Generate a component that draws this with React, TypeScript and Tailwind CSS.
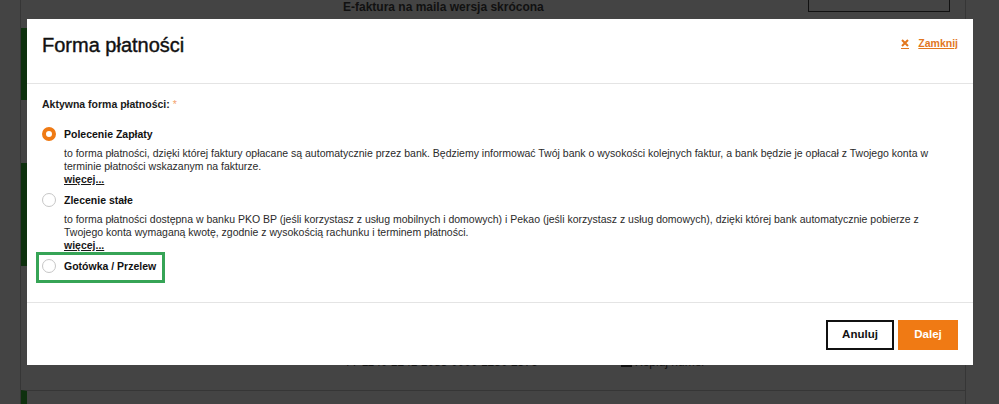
const font = { fontFamily: '"Liberation Sans", Arial, sans-serif' }

const options = [
  {
    label: 'Polecenie Zapłaty',
    checked: true,
    lines: [
      'to forma płatności, dzięki której faktury opłacane są automatycznie przez bank. Będziemy informować Twój bank o wysokości kolejnych faktur, a bank będzie je opłacał z Twojego konta w',
      'terminie płatności wskazanym na fakturze.',
    ],
  },
  {
    label: 'Zlecenie stałe',
    checked: false,
    lines: [
      'to forma płatności dostępna w banku PKO BP (jeśli korzystasz z usług mobilnych i domowych) i Pekao (jeśli korzystasz z usług domowych), dzięki której bank automatycznie pobierze z',
      'Twojego konta wymaganą kwotę, zgodnie z wysokością rachunku i terminem płatności.',
    ],
  },
  { label: 'Gotówka / Przelew', checked: false, lines: [], highlight: true },
]

function Radio({ checked }: { checked: boolean }) {
  return checked ? (
    <span className="h-[14px] w-[14px] shrink-0 rounded-full border-[4px] border-[#ef7a14] bg-white" />
  ) : (
    <span className="h-[14px] w-[14px] shrink-0 rounded-full border border-[#c6c6c6] bg-white" />
  )
}

function Background() {
  return (
    <div className="flex h-[404px] w-[999px] bg-[#444444]">
      <div className="w-[20px] shrink-0" />
      <div className="flex w-[946px] shrink-0 flex-col border-x border-[#363636]">
        {/* górny pasek */}
        <div className="flex h-[28px] items-start">
          <span className="pl-[322px] text-[12px] font-bold leading-[14px] text-[#111]">
            E-faktura na maila wersja skrócona
          </span>
          <span className="ml-auto mr-[15px] h-[12px] w-[142px] border-x border-b border-[#111]" />
        </div>
        <div className="h-[72px] border-l-[6px] border-[#0e300e]" />
        <div className="h-[63px]" />
        <div className="h-[103px] border-l-[6px] border-[#0e300e]" />
        {/* numer konta */}
        <div className="flex h-[124px] items-end pb-[20px] pl-[324px] text-[12px] leading-[16px] text-[#111]">
          <span>77 1140 1241 1083 0000 1250 2376</span>
          <span className="ml-[83px] flex items-center gap-[3px]">
            <span className="h-[9px] w-[11px] bg-[#111]" />
            Kopiuj numer
          </span>
        </div>
        <div className="flex-1 border-t border-l-[6px] border-t-[#363636] border-l-[#0e300e]" />
      </div>
    </div>
  )
}

export default function App() {
  return (
    <div className="relative h-[404px] w-[999px] overflow-hidden" style={font}>
      <Background />

      {/* Okno modalne */}
      <div className="absolute left-[27px] top-[19px] flex h-[346px] w-[946px] flex-col bg-white">
        <div className="flex h-[65px] shrink-0 items-start justify-between border-b border-[#e4e4e4] px-[15px] pt-[16px]">
          <h2 className="text-[20px] font-normal leading-[20px] text-[#111] [-webkit-text-stroke:0.4px_#111]">
            Forma płatności
          </h2>
          <a className="mt-[2px] flex items-center gap-[9px] text-[10.5px] font-bold leading-[13px] text-[#e2771e]">
            <svg width="8" height="10" viewBox="0 0 8 10">
              <path d="M1 1 L7 7 M7 1 L1 7" stroke="#e2771e" strokeWidth="2" />
              <path d="M0 9.5 H8" stroke="#e2771e" strokeWidth="1" />
            </svg>
            <span className="underline">Zamknij</span>
          </a>
        </div>

        <div className="flex-1 border-b border-[#e4e4e4] px-[15px] pt-[14px]">
          <p className="text-[10.5px] font-bold leading-[13px] text-[#1a1a1a]">
            Aktywna forma płatności: <span className="font-normal text-[#f4a46e]">*</span>
          </p>
          <div className="mt-[16px] flex flex-col gap-[7px]">
            {options.map((o) => (
              <div key={o.label}>
                <div className="relative flex h-[14px] items-center gap-[8px]">
                  <Radio checked={o.checked} />
                  <span className="text-[10.5px] font-bold leading-[13px] text-[#111]">{o.label}</span>
                  {o.highlight && (
                    <span className="absolute -left-[6px] -top-[7px] h-[31px] w-[129px] border-[3px] border-[#36a456]" />
                  )}
                </div>
                {o.lines.length > 0 && (
                  <div className="mt-[6px] pl-[22px] text-[10.5px] leading-[13px] text-[#2a2a2a]">
                    {o.lines.map((l) => (
                      <div key={l} className="whitespace-nowrap">
                        {l}
                      </div>
                    ))}
                    <a className="font-bold text-[#1a1a1a] underline">więcej...</a>
                  </div>
                )}
              </div>
            ))}
          </div>
        </div>

        <div className="flex h-[62px] shrink-0 items-start justify-end gap-[4px] pr-[15px] pt-[17px]">
          <button className="h-[30px] w-[68px] border-2 border-[#111] bg-white text-[11.5px] font-bold text-[#111]">
            Anuluj
          </button>
          <button className="h-[30px] w-[60px] bg-[#f07a14] text-[11.5px] font-bold text-white">Dalej</button>
        </div>
      </div>
    </div>
  )
}
